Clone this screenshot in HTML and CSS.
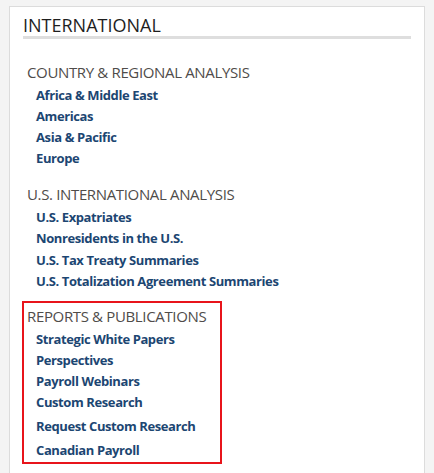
FILE: index.html
```html
<!DOCTYPE html>
<html lang="en">
<head>
  <meta charset="UTF-8">
  <title>International</title>
  <link rel="stylesheet" href="styles.css">
</head>
<body>

  <div class="panel">
    <h2 class="panel-title">INTERNATIONAL</h2>

    <div class="section">
      <h3>COUNTRY &amp; REGIONAL ANALYSIS</h3>
      <ul class="links">
        <li><a href="#">Africa &amp; Middle East</a></li>
        <li><a href="#">Americas</a></li>
        <li><a href="#">Asia &amp; Pacific</a></li>
        <li><a href="#">Europe</a></li>
      </ul>
    </div>

    <div class="section">
      <h3>U.S. INTERNATIONAL ANALYSIS</h3>
      <ul class="links">
        <li><a href="#">U.S. Expatriates</a></li>
        <li><a href="#">Nonresidents in the U.S.</a></li>
        <li><a href="#">U.S. Tax Treaty Summaries</a></li>
        <li><a href="#">U.S. Totalization Agreement Summaries</a></li>
      </ul>
    </div>

    <div class="section highlight">
      <h3>REPORTS &amp; PUBLICATIONS</h3>
      <ul class="links">
        <li><a href="#">Strategic White Papers</a></li>
        <li><a href="#">Perspectives</a></li>
        <li><a href="#">Payroll Webinars</a></li>
        <li><a href="#">Custom Research</a></li>
        <li class="spaced"><a href="#">Request Custom Research</a></li>
        <li class="spaced"><a href="#">Canadian Payroll</a></li>
      </ul>
    </div>
  </div>

</body>
</html>
```

FILE: styles.css
```css
html { background: #f4f4f4; }
body {
  margin: 6px 9px 0;
  font-family: "Open Sans", "Liberation Sans", sans-serif;
}
.panel {
  background: #fff;
  border: 1px solid #dcdcdc;
  box-shadow: 1px 0 0 #ececec;
  padding: 7px 13px 9px;
}
.panel-title {
  margin: 0 0 23px;
  font-size: 18px;
  font-weight: normal;
  line-height: 22px;
  color: #1e1e1e;
  border-bottom: 3px solid #dedede;
}
.section { margin-top: 15px; padding-left: 4px; }
.section h3 {
  margin: 0 0 3px;
  font-size: 15px;
  font-weight: normal;
  line-height: 20px;
  letter-spacing: -0.35px;
  color: #4f4c4a;
}
.links { list-style: none; margin: 0; padding: 0 0 0 9px; }
.links li { font-size: 13px; line-height: 21px; letter-spacing: -0.4px; }
.section:nth-child(3) .links li { line-height: 21.4px; }
.links li.spaced { margin-top: 3px; }
.links a { color: #1c4672; font-weight: bold; text-decoration: none; }
.highlight {
  width: fit-content;
  margin: 8px 0 0 -1px;
  padding: 3px 14px 1px 3px;
  border: 2px solid #e8141b;
}
```
